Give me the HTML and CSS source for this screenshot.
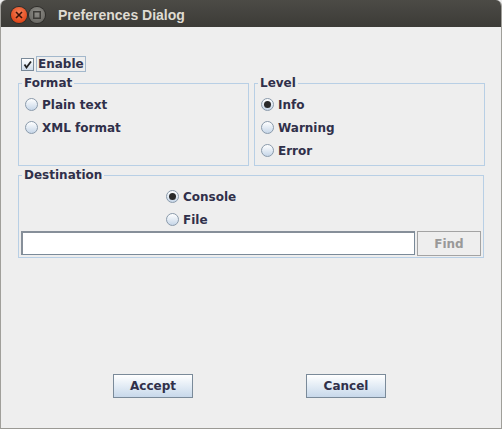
FILE: index.html
```html
<!DOCTYPE html>
<html>
<head>
<meta charset="utf-8">
<link rel="stylesheet" href="styles.css">
</head>
<body>
<div class="window">
  <div class="titlebar">
    <div class="wbtn close">
      <svg width="8" height="8" viewBox="0 0 8 8"><path d="M1 1L7 7M7 1L1 7" stroke="#3a1208" stroke-width="1.6"/></svg>
    </div>
    <div class="wbtn max">
      <svg width="8" height="8" viewBox="0 0 8 8"><rect x="0.75" y="0.75" width="6.5" height="6.5" fill="none" stroke="#3c3b37" stroke-width="1.5"/></svg>
    </div>
    <div class="title">Preferences Dialog</div>
  </div>
  <div class="content">
    <div class="enable-row">
      <span class="check">
        <svg width="9" height="9" viewBox="0 0 9 9"><path d="M1.5 4.5L3.5 7.5L8 1.5" fill="none" stroke="#222" stroke-width="1.8"/></svg>
      </span>
      <span class="focus-label">Enable</span>
    </div>
    <div class="two-col">
      <fieldset class="group">
        <legend>Format</legend>
        <div class="radio-row"><span class="radio"></span>Plain text</div>
        <div class="radio-row"><span class="radio"></span>XML format</div>
      </fieldset>
      <fieldset class="group">
        <legend>Level</legend>
        <div class="radio-row"><span class="radio on"></span>Info</div>
        <div class="radio-row"><span class="radio"></span>Warning</div>
        <div class="radio-row"><span class="radio"></span>Error</div>
      </fieldset>
    </div>
    <fieldset class="group dest">
      <legend>Destination</legend>
      <div class="dest-radios">
        <div class="radio-row"><span class="radio on"></span>Console</div>
        <div class="radio-row"><span class="radio"></span>File</div>
      </div>
      <div class="file-row">
        <div class="textfield"></div>
        <div class="btn disabled">Find</div>
      </div>
    </fieldset>
    <div class="actions">
      <div class="btn action">Accept</div>
      <div class="btn action">Cancel</div>
    </div>
  </div>
</div>
</body>
</html>
```
FILE: styles.css
```css
* { box-sizing: border-box; }
html, body { margin: 0; padding: 0; background: #eeeeee; }
body { width: 502px; height: 429px; overflow: hidden; }

.window {
  width: 502px;
  height: 429px;
  background: #eeeeee;
  border-left: 1px solid #a09f9a;
  border-right: 1px solid #a09f9a;
  border-bottom: 1px solid #9a9994;
  border-radius: 6px 6px 0 0;
  overflow: hidden;
  font-family: "DejaVu Sans", sans-serif;
  font-weight: bold;
  font-size: 12px;
  color: #30304a;
  display: flex;
  flex-direction: column;
}

.titlebar {
  height: 27px;
  flex: none;
  background: linear-gradient(#4c4b46, #3c3b37);
  display: flex;
  align-items: center;
  padding-left: 10px;
  padding-top: 3px;
}
.wbtn {
  width: 16px;
  height: 16px;
  border-radius: 50%;
  display: flex;
  align-items: center;
  justify-content: center;
  margin-right: 2px;
}
.close {
  background: radial-gradient(circle at 50% 35%, #f5825a, #e2491c 70%, #b83812);
  box-shadow: 0 0 0 1px #2e2d2a;
}
.max {
  background: radial-gradient(circle at 50% 35%, #8e8d88, #6e6d68 70%, #5a5955);
  box-shadow: 0 0 0 1px #2e2d2a;
}
.title {
  font-family: "Liberation Sans", Arial, sans-serif;
  font-weight: bold;
  font-size: 14px;
  color: #dfdbd2;
  margin-left: 11px;
}

.content {
  flex: 1;
  padding: 0 17px 0 17px;
  display: flex;
  flex-direction: column;
}

.enable-row {
  margin-top: 29px;
  height: 16px;
  display: flex;
  align-items: flex-start;
  padding-left: 3px;
}
.check {
  margin-top: 2px;
  width: 13px;
  height: 13px;
  border: 1px solid #7a8a99;
  background: linear-gradient(#ffffff, #cfdcea);
  display: flex;
  align-items: center;
  justify-content: center;
}
.focus-label {
  margin-left: 2px;
  height: 16px;
  line-height: 15px;
  border: 1px solid #a3b8cc;
  padding: 0 1px 0 1px;
}

.two-col {
  margin-top: 4px;
  display: grid;
  grid-template-columns: 231px 231px;
  column-gap: 5px;
}

fieldset.group {
  margin: 0;
  border: 1px solid #b8cfe5;
  padding: 3px 0 3px 3px;
  min-width: 0;
}
legend {
  padding: 0 2px;
  line-height: 14px;
  color: #30304a;
}

.radio-row {
  height: 23px;
  display: flex;
  align-items: center;
  padding-left: 3px;
}
.radio {
  width: 13px;
  height: 13px;
  border-radius: 50%;
  border: 1px solid #8a9aab;
  background: linear-gradient(#ffffff, #c6d6e8);
  margin-right: 4px;
  flex: none;
  display: flex;
  align-items: center;
  justify-content: center;
}
.radio.on::after {
  content: "";
  width: 7px;
  height: 7px;
  border-radius: 50%;
  background: #2a2a2a;
}

fieldset.dest {
  margin-top: 2px;
  height: 90px;
  padding: 3px 2px 0 2px;
}
.dest legend {
  margin-left: 1px;
}
.dest-radios {
  padding-left: 142px;
}
.file-row {
  display: flex;
  align-items: flex-start;
  gap: 2px;
  height: 25px;
}
.textfield {
  flex: 1;
  height: 24px;
  background: #fff;
  border: 1px solid #7a8a99;
  border-top: 2px solid #868f99;
  border-left: 2px solid #868f99;
}
.btn {
  height: 24px;
  display: flex;
  align-items: center;
  justify-content: center;
}
.btn.disabled {
  height: 25px;
  width: 64px;
  border: 1px solid #a3a3a3;
  color: #999999;
}
.actions {
  margin-top: 116px;
  display: flex;
  padding-left: 95px;
  gap: 113px;
}
.btn.action {
  width: 80px;
  border: 1px solid #7a8a99;
  background: linear-gradient(#ffffff, #dde8f3 60%, #c8d8ea);
  color: #30304a;
}
```
